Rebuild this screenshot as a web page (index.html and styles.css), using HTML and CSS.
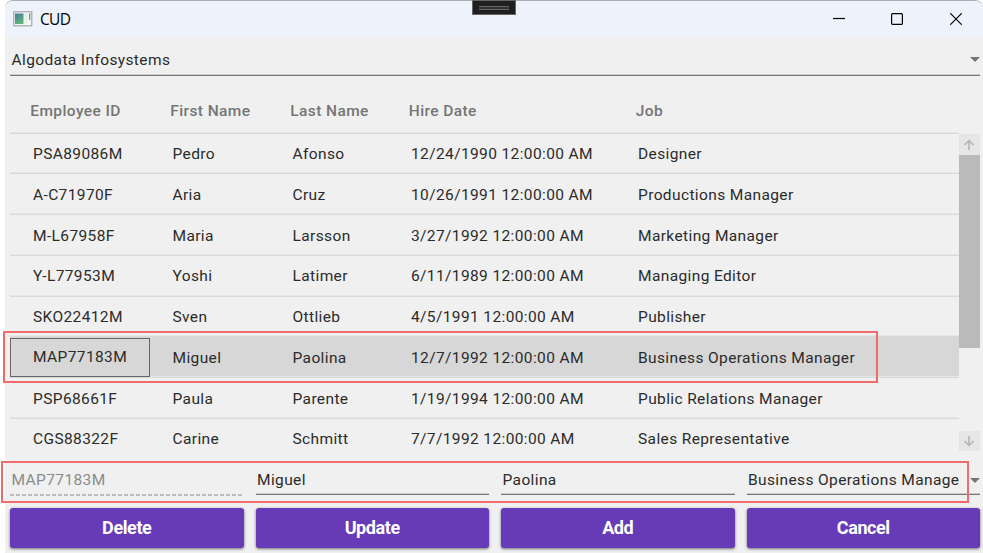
FILE: index.html
```html
<!DOCTYPE html>
<html lang="en">
<head>
<meta charset="utf-8">
<title>CUD</title>
<link rel="stylesheet" href="styles.css">
</head>
<body>
<div class="window">
  <header class="titlebar">
    <svg class="app-icon" width="20" height="16" viewBox="0 0 20 16">
      <defs><linearGradient id="g" x1="0" y1="0" x2="0.4" y2="1"><stop offset="0" stop-color="#3f7f9c"/><stop offset="1" stop-color="#5fb57b"/></linearGradient></defs>
      <rect x="0.75" y="0.75" width="18" height="14" fill="#f5f6f7" stroke="#a9adb2" stroke-width="1.3"/>
      <rect x="2" y="2.5" width="8.5" height="10.5" fill="url(#g)"/>
      <rect x="11.5" y="2.5" width="3" height="10" fill="#e9ebec"/>
      <rect x="16" y="2.5" width="1.3" height="6.5" fill="url(#g)"/>
    </svg>
    <h1 class="title">CUD</h1>
    <div class="controls">
      <svg width="12" height="12" viewBox="0 0 12 12"><path d="M0 5.5H12"/></svg>
      <svg width="12" height="12" viewBox="0 0 12 12"><rect x=".6" y=".6" width="10.8" height="10.8" rx="1"/></svg>
      <svg width="12" height="12" viewBox="0 0 12 12"><path d="M.3.3 11.7 11.7M11.7.3.3 11.7"/></svg>
    </div>
    <div class="debug-bar"><span></span></div>
  </header>
  <main class="content">
    <div class="field combo publisher"><span>Algodata Infosystems</span><i class="caret"></i></div>
    <section class="grid">
      <div class="row head"><span>Employee ID</span><span>First Name</span><span>Last Name</span><span>Hire Date</span><span>Job</span></div>
      <div class="viewport">
        <div class="rows">
          <div class="row"><span>PSA89086M</span><span>Pedro</span><span>Afonso</span><span>12/24/1990 12:00:00 AM</span><span>Designer</span></div>
          <div class="row"><span>A-C71970F</span><span>Aria</span><span>Cruz</span><span>10/26/1991 12:00:00 AM</span><span>Productions Manager</span></div>
          <div class="row"><span>M-L67958F</span><span>Maria</span><span>Larsson</span><span>3/27/1992 12:00:00 AM</span><span>Marketing Manager</span></div>
          <div class="row"><span>Y-L77953M</span><span>Yoshi</span><span>Latimer</span><span>6/11/1989 12:00:00 AM</span><span>Managing Editor</span></div>
          <div class="row"><span>SKO22412M</span><span>Sven</span><span>Ottlieb</span><span>4/5/1991 12:00:00 AM</span><span>Publisher</span></div>
          <div class="row selected"><span class="focused">MAP77183M</span><span>Miguel</span><span>Paolina</span><span>12/7/1992 12:00:00 AM</span><span>Business Operations Manager</span><div class="mark mark-row"></div></div>
          <div class="row"><span>PSP68661F</span><span>Paula</span><span>Parente</span><span>1/19/1994 12:00:00 AM</span><span>Public Relations Manager</span></div>
          <div class="row last"><span>CGS88322F</span><span>Carine</span><span>Schmitt</span><span>7/7/1992 12:00:00 AM</span><span>Sales Representative</span></div>
        </div>
        <div class="scrollbar">
          <div class="arrow"><svg width="12" height="12" viewBox="0 0 12 12"><path d="M6 11V1.5M1.5 6 6 1.5 10.5 6"/></svg></div>
          <div class="thumb"></div>
          <div class="arrow down"><svg width="12" height="12" viewBox="0 0 12 12"><path d="M6 1V10.5M1.5 6 6 10.5 10.5 6"/></svg></div>
        </div>
      </div>
    </section>
    <section class="editor">
      <div class="field disabled"><span>MAP77183M</span><svg class="dashes" width="234" height="2"><path d="M0 1H234"/></svg></div>
      <div class="field"><span>Miguel</span></div>
      <div class="field"><span>Paolina</span></div>
      <div class="field combo"><span class="clip">Business Operations Manage</span><i class="caret"></i></div>
      <div class="mark mark-editor"></div>
    </section>
    <section class="actions">
      <button>Delete</button><button>Update</button><button>Add</button><button>Cancel</button>
    </section>
  </main>
</div>
</body>
</html>
```
FILE: styles.css
```css
* { box-sizing: border-box; }
body {
  margin: 0;
  background: #fff;
  overflow: hidden;
  font: 15.5px/20px Roboto, sans-serif;
  letter-spacing: 0.38px;
  color: #2b2b2b;
}
.window {
  height: 553px;
  margin-left: 5px;
  background: #f0f0f0;
  border-top: 1px solid #adadad;
  border-radius: 8px 8px 0 0;
}
.titlebar {
  position: relative;
  display: flex;
  align-items: center;
  height: 37px;
  padding: 0 21px 0 8px;
  background: #eef3fb;
  border-radius: 8px 8px 0 0;
}
.title {
  margin: -1px 0 0 7px;
  font: 400 15.5px/20px "Open Sans", sans-serif;
  letter-spacing: -0.7px;
  color: #000;
}
.app-icon { margin-top: -1px; }
.controls { display: flex; gap: 46.5px; margin: -1px 0 0 auto; }
.controls svg { fill: none; stroke: #000; stroke-width: 1.2; }
.controls svg:nth-child(2) { margin: 0 .5px 0 -.5px; }
.debug-bar {
  position: absolute;
  left: 467px;
  top: -1px;
  width: 44px;
  height: 15px;
  padding: 5px 6px;
  background: #1f1f1f;
  border: 1px solid #666;
}
.debug-bar span { display: block; height: 4px; border: solid #666; border-width: 1px 0; background: #333; }
.content { padding: 0 3px 0 5px; }
.field {
  position: relative;
  border-bottom: 1px solid #777;
  box-shadow: inset 0 -1px #ccc;
  padding-left: 1.5px;
  white-space: nowrap;
}
.publisher { height: 38px; padding-top: 12px; }
.caret {
  position: absolute;
  right: 0;
  top: 8px;
  border: solid transparent;
  border-width: 5px 5px 0;
  border-top-color: #757575;
}
.publisher .caret { top: 19px; }
.grid { height: 376px; }
.row {
  position: relative;
  display: grid;
  grid-template-columns: 140px 120px 118.5px 227px 1fr;
  width: 949px;
  height: 40.75px;
  border-bottom: 1px solid #d9d9d9;
  box-shadow: inset 0 -1px #e6e6e6;
  align-items: center;
}
.row > span { padding: 1.2px 0 0 22.5px; }
.row > span:first-child { padding-left: 23px; }
.head { height: 57.6px; color: #757575; font-weight: 500; letter-spacing: .4px; padding-top: 12px; }
.head > span, .head > span:first-child { padding-left: 20.3px; }
.viewport { display: flex; height: 318px; }
.rows { height: 324px; }
.selected { background: #d7d7d7; }
.last { border: 0; box-shadow: none; height: 38.5px; }
.row > .focused:first-child { align-self: start; height: 39px; line-height: 37px; padding: 0 0 0 22px; border: 1px solid #666; margin-top: 1px; }
.scrollbar { width: 21px; display: flex; flex-direction: column; padding-top: .4px; }
.arrow { height: 21px; display: flex; align-items: center; justify-content: center; padding: 1px 2px 0 0; background: #e6e6e6; }
.arrow svg { fill: none; stroke: #b3b3b3; stroke-width: 1.5; }
.thumb { height: 193px; background: #bababa; }
.down { margin-top: 83px; height: 20px; }
.editor, .actions { display: grid; grid-template-columns: repeat(4, 1fr); gap: 12px; }
.editor { position: relative; padding-top: 18.4px; height: 43.4px; margin-top: -.4px; }
.editor .field { height: 25px; }
.editor .disabled { color: #8b8b8b; border: 0; box-shadow: none; }
.dashes { position: absolute; left: 0; bottom: -1px; }
.dashes path { stroke: #aaa; stroke-width: 1.5; stroke-dasharray: 4 2; }
.clip { display: block; width: 212px; overflow: hidden; }
.mark { position: absolute; border: 2px solid #ee6c6c; z-index: 2; }
.mark-row { left: -7px; top: -6px; width: 875px; height: 52px; }
.mark-editor { left: -9px; top: 9px; width: 968px; height: 42px; }
.actions { padding-top: 13px; }
.actions button {
  height: 40px;
  padding: 0;
  border: 0;
  border-radius: 3px;
  background: #673ab7;
  color: #fff;
  font: 700 18px/40px Roboto, sans-serif;
  letter-spacing: -0.4px;
  box-shadow: 0 1px 3px rgba(0, 0, 0, .55);
}
```
